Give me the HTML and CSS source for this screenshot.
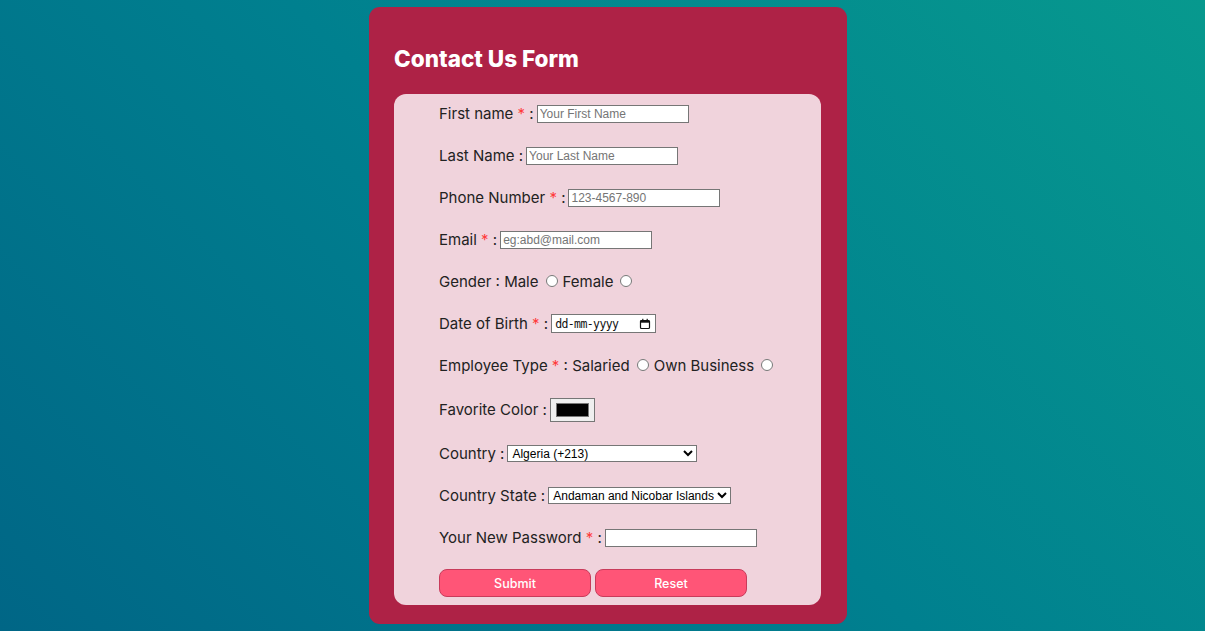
FILE: index.html
```html
<!DOCTYPE html>
<html lang="en">
<head>
<meta charset="utf-8">
<title>Contact Us Form</title>
<link rel="stylesheet" href="styles.css">
</head>
<body>
<main class="page">
  <section class="card">
    <h1 class="title">Contact Us Form</h1>
    <form class="panel">
      <div class="row">
        <label for="fn">First name <span class="req">*</span> :</label>
        <input class="text" id="fn" type="text" placeholder="Your First Name">
      </div>
      <div class="row">
        <label for="ln">Last Name :</label>
        <input class="text" id="ln" type="text" placeholder="Your Last Name">
      </div>
      <div class="row">
        <label for="ph">Phone Number <span class="req">*</span> :</label>
        <input class="text" id="ph" type="text" placeholder="123-4567-890">
      </div>
      <div class="row">
        <label for="em">Email <span class="req">*</span> :</label>
        <input class="text" id="em" type="text" placeholder="eg:abd@mail.com">
      </div>
      <div class="row">
        <span>Gender : Male</span><input class="radio" type="radio" name="g">
        <span>Female</span><input class="radio" type="radio" name="g">
      </div>
      <div class="row">
        <label>Date of Birth <span class="req">*</span> :</label>
        <span class="date"><span class="date-text">dd-mm-yyyy</span>
          <svg class="cal" width="12" height="12" viewBox="0 0 12 12"><rect x="1.5" y="2.5" width="9" height="8" rx="1" fill="none" stroke="#111" stroke-width="1.2"/><rect x="1.5" y="2.5" width="9" height="2.2" fill="#111"/><rect x="3.2" y="0.8" width="1.2" height="2" fill="#111"/><rect x="7.6" y="0.8" width="1.2" height="2" fill="#111"/></svg>
        </span>
      </div>
      <div class="row">
        <span>Employee Type <span class="req">*</span> : Salaried</span><input class="radio" type="radio" name="e">
        <span>Own Business</span><input class="radio" type="radio" name="e">
      </div>
      <div class="row row-tall">
        <label>Favorite Color :</label>
        <span class="color"><span class="swatch"></span></span>
      </div>
      <div class="row">
        <label>Country :</label>
        <select class="sel sel-country"><option>Algeria (+213)</option></select>
      </div>
      <div class="row">
        <label>Country State :</label>
        <select class="sel sel-state"><option>Andaman and Nicobar Islands</option></select>
      </div>
      <div class="row">
        <label for="pw">Your New Password <span class="req">*</span> :</label>
        <input class="text" id="pw" type="password">
      </div>
      <div class="buttons">
        <button class="btn" type="submit">Submit</button>
        <button class="btn" type="reset">Reset</button>
      </div>
    </form>
  </section>
</main>
</body>
</html>
```
FILE: styles.css
```css
html, body {
  margin: 0;
  height: 100%;
}
body {
  background: linear-gradient(45deg, #006686 0%, #00808f 50%, #07998e 100%);
  font-family: "Inter", "Open Sans", sans-serif;
  overflow: hidden;
}
.page {
  display: flex;
  justify-content: center;
  padding: 7px 0 0 11px;
}
.card {
  width: 478px;
  box-sizing: border-box;
  background: #ae2246;
  border-radius: 11px;
  padding: 0 26px 19px 25px;
}
.title {
  margin: 0;
  padding: 39px 0 0;
  height: 48px;
  color: #fff;
  font-size: 22.5px;
  font-weight: 800;
  line-height: 26px;
  letter-spacing: 0;
}
.panel {
  background: #f0d3dc;
  border-radius: 12px;
  padding: 9px 10px 8px 45px;
  display: flex;
  flex-direction: column;
  gap: 21px;
  color: #222;
  font-size: 15px;
}
.row {
  height: 21px;
  display: flex;
  align-items: center;
  white-space: pre;
}
.row-tall { height: 25px; }
.req { color: #ff3b3b; }
label { margin-right: 3px; }
.text {
  box-sizing: border-box;
  width: 152px;
  height: 18px;
  border: 1px solid #767676;
  padding: 1px 2px;
  font: 12px "Liberation Sans", Arial, sans-serif;
  background: #fff;
  margin: 0;
  border-radius: 0;
}
.text::placeholder { color: #757575; }
.radio {
  width: 12px;
  height: 12px;
  margin: 0 5px 2px 7px;
}
.date {
  box-sizing: border-box;
  width: 105px;
  height: 19px;
  border: 1px solid #767676;
  background: #fff;
  display: flex;
  align-items: center;
  justify-content: space-between;
  padding: 0 4px 0 3px;
  font: 11.5px "DejaVu Sans Mono", monospace;
  color: #111;
}
.date-text { letter-spacing: -0.6px; }
.cal { display: block; }
.color {
  box-sizing: border-box;
  width: 45px;
  height: 24px;
  border: 1px solid #767676;
  background: #efefef;
  padding: 4px 5px;
  display: flex;
}
.swatch {
  flex: 1;
  background: #000;
  border: 1px solid #777;
}
.sel {
  box-sizing: border-box;
  height: 17px;
  border: 1px solid #767676;
  background: #fff;
  font: 12px "Liberation Sans", Arial, sans-serif;
  color: #000;
  padding: 0;
  border-radius: 0;
}
.sel-country { width: 190px; }
.sel-state { width: 183px; }
.buttons {
  display: flex;
  gap: 4px;
}
.btn {
  box-sizing: border-box;
  width: 152px;
  height: 28px;
  background: #ff5577;
  border: 1px solid #c93b5b;
  border-radius: 8px;
  color: #fff;
  font: 500 12.5px "Inter", "Open Sans", sans-serif;
  padding: 0;
}
```
